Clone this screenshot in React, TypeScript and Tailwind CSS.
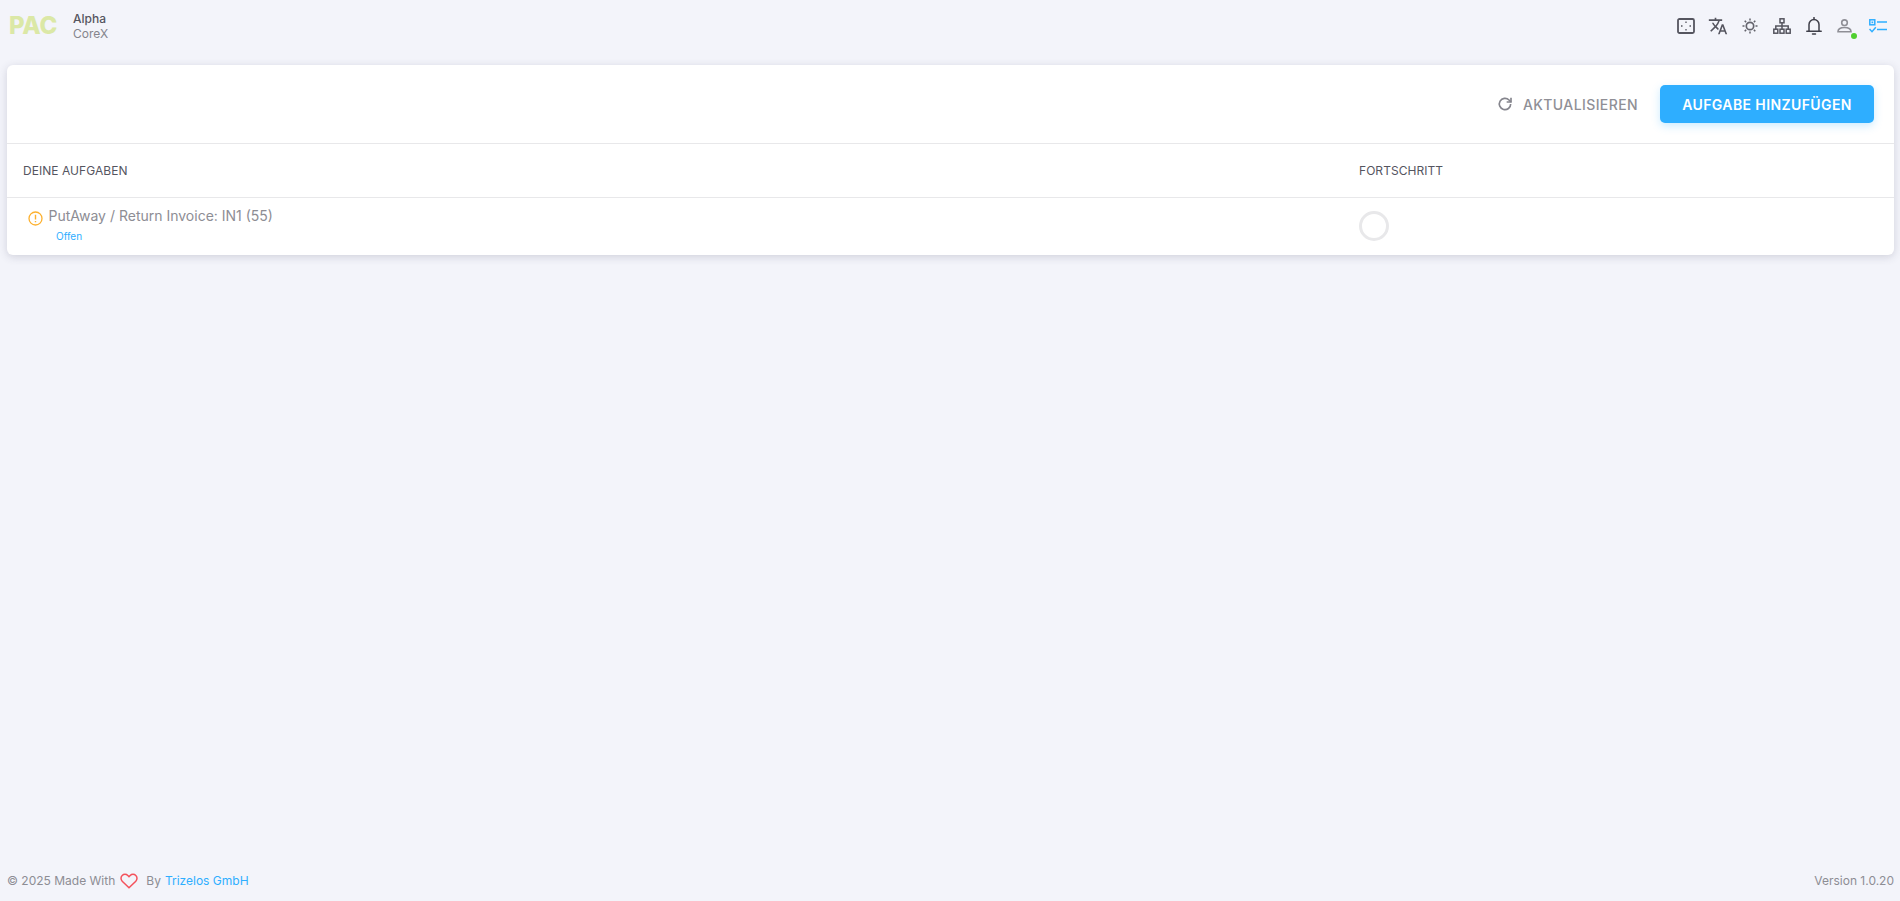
import React from "react";
import { MdTranslate } from "react-icons/md";

const IconButton = ({ children }: { children: React.ReactNode }) => (
  <span className="relative flex h-6 w-6 items-center justify-center">{children}</span>
);

function HeaderIcons() {
  return (
    <div className="flex items-center gap-[8px] text-[#55555f]">
      <IconButton>
        <svg width="18" height="16" viewBox="0 0 18 16" fill="none" stroke="currentColor">
          <rect x="1" y="1" width="16" height="14" rx="1.500" strokeWidth="1.800" />
          <path d="M9 3.500v1.500M9 11v1.500M4 8h1.500M12.500 8H14" strokeWidth="1.300" />
        </svg>
      </IconButton>
      <IconButton>
        <MdTranslate size={20} />
      </IconButton>
      <IconButton>
        <svg width="16" height="16" viewBox="0 0 16 16" fill="none" stroke="#63636c">
          <circle cx="8" cy="8" r="3.700" strokeWidth="1.700" />
          <path d="M8 .500v2M8 13.500v2M.500 8h2M13.500 8h2M2.700 2.700l1.400 1.400M11.900 11.900l1.400 1.400M2.700 13.300l1.400-1.400M11.900 4.100l1.400-1.400" strokeWidth="1.500" />
        </svg>
      </IconButton>
      <IconButton>
        <svg width="18" height="16" viewBox="0 0 18 16" fill="none" stroke="currentColor" strokeWidth="1.500">
          <rect x="7" y=".800" width="4" height="4" />
          <rect x=".800" y="11.200" width="4" height="4" />
          <rect x="7" y="11.200" width="4" height="4" />
          <rect x="13.200" y="11.200" width="4" height="4" />
          <path d="M9 4.800v6.400M2.800 11.200V8h12.400v3.200" />
        </svg>
      </IconButton>
      <IconButton>
        <svg width="16" height="18" viewBox="0 0 16 18" fill="none" stroke="#3f3f49" strokeWidth="1.500">
          <path d="M3 14V7.500a5 5 0 0 1 10 0V14" />
          <path d="M.800 14.300h14.400M8 .500v2M6.500 17h3" strokeLinecap="round" />
        </svg>
      </IconButton>
      <IconButton>
        <svg className="mr-[4px]" width="15" height="14" viewBox="0 0 15 14" fill="none" stroke="#8f8f96" strokeWidth="1.600">
          <circle cx="7.500" cy="3.700" r="2.800" />
          <path d="M1 12.800c0-2.800 2.500-4.300 6.500-4.300s6.500 1.500 6.500 4.300z" />
        </svg>
        <span className="absolute bottom-[-1px] right-[1px] h-[6px] w-[6px] rounded-full bg-[#4fcf2f]" />
      </IconButton>
      <IconButton>
        <svg width="18" height="14" viewBox="0 0 18 14" fill="none">
          <rect x=".800" y=".800" width="5" height="5" stroke="#2eaeff" strokeWidth="1.500" />
          <rect x="2.500" y="2.500" width="1.700" height="1.700" fill="#2eaeff" />
          <path d="M8 3h10M8 10.500h10" stroke="#2eaeff" strokeWidth="1.500" />
          <path d="M.500 10l2.500 2.700 3.800-4.500" stroke="#2eaeff" strokeWidth="1.500" />
        </svg>
      </IconButton>
    </div>
  );
}

function Header() {
  return (
    <header className="flex h-[65px] items-start justify-between pl-[9px] pr-[10px]">
      <div className="flex items-center pt-[10px]">
        <span className="w-[64px] text-[24px] leading-[32px] font-extrabold tracking-[-0.2px] text-[#dbe8a6]">
          PAC
        </span>
        <div className="text-[12px] leading-[15px]">
          <div className="font-medium text-[#55555f]">Alpha</div>
          <div className="text-[#85858d]">CoreX</div>
        </div>
      </div>
      <div className="pt-[14px]">
        <HeaderIcons />
      </div>
    </header>
  );
}

function TaskCard() {
  return (
    <section className="ml-[7px] mr-[6px] rounded-[6px] bg-white shadow-[0_2px_8px_rgba(70,70,100,0.2)]">
      <div className="flex h-[79px] items-center justify-end border-b border-[#e8e8ea] pr-[20px]">
        <button className="mr-[22px] flex items-center text-[14px] font-medium tracking-[0.4px] text-[#8f8f96]">
          <svg className="mr-[10px]" width="16" height="16" viewBox="0 0 24 24" fill="none" stroke="#85858d" strokeWidth="2.500">
            <path d="M20.500 12a8.500 8.500 0 1 1-2.500-6L21 9" />
            <path d="M21 2.500V9h-6.500" />
          </svg>
          AKTUALISIEREN
        </button>
        <button className="flex h-[38px] w-[214px] items-center justify-center rounded-[5px] bg-[#2eaeff] text-[14px] font-semibold tracking-[0.4px] text-white shadow-[0_3px_8px_rgba(46,174,255,0.25)]">
          AUFGABE HINZUFÜGEN
        </button>
      </div>
      <div className="flex h-[54px] items-center border-b border-[#e8e8ea] text-[12px] tracking-[0.05px] text-[#55555f]">
        <div className="w-[1352px] pl-[16px]">DEINE AUFGABEN</div>
        <div>FORTSCHRITT</div>
      </div>
      <div className="flex h-[57px]">
        <div className="w-[1352px] pl-[21px] pt-[8px]">
          <div className="flex items-center text-[14px] leading-[20px] text-[#8d8d94]">
            <svg className="mr-[5.500px] mt-[4px]" width="15" height="15" viewBox="0 0 15 15" fill="none">
              <circle cx="7.500" cy="7.500" r="6.500" stroke="#fdb12f" strokeWidth="1.300" />
              <path d="M7.500 3.800v4.600M7.500 10v1.300" stroke="#fdb12f" strokeWidth="1.400" />
            </svg>
            PutAway / Return Invoice: IN1 (55)
          </div>
          <div className="pl-[28px] pt-[3px] text-[10px] leading-[14px] text-[#2eaeff]">Offen</div>
        </div>
        <div className="pt-[13px]">
          <div className="h-[30px] w-[30px] rounded-full border-[3px] border-[#e8e8ea]" />
        </div>
      </div>
    </section>
  );
}

function Footer() {
  return (
    <footer className="flex h-[41px] items-start justify-between pl-[7px] pr-[6px] pt-[11px] text-[12px] leading-[20px] text-[#8d8d94]">
      <div className="flex items-center">
        <span>© 2025 Made With</span>
        <svg className="ml-[5px] mr-[8px]" width="18" height="16" viewBox="0 0 18 16" fill="none" stroke="#f4525c" strokeWidth="1.500">
          <path d="M9 14.800L2.200 8.200a4 4 0 0 1 0-5.700 4 4 0 0 1 5.600 0L9 3.700l1.200-1.200a4 4 0 0 1 5.600 0 4 4 0 0 1 0 5.700z" />
        </svg>
        <span>By</span>
        <span className="ml-[4px] text-[#2eaeff]">Trizelos GmbH</span>
      </div>
      <span>Version 1.0.20</span>
    </footer>
  );
}

export default function App() {
  return (
    <div className="flex h-[901px] flex-col overflow-hidden bg-[#f3f4fa] font-['Inter',sans-serif]">
      <Header />
      <main className="flex-1">
        <TaskCard />
      </main>
      <Footer />
    </div>
  );
}
